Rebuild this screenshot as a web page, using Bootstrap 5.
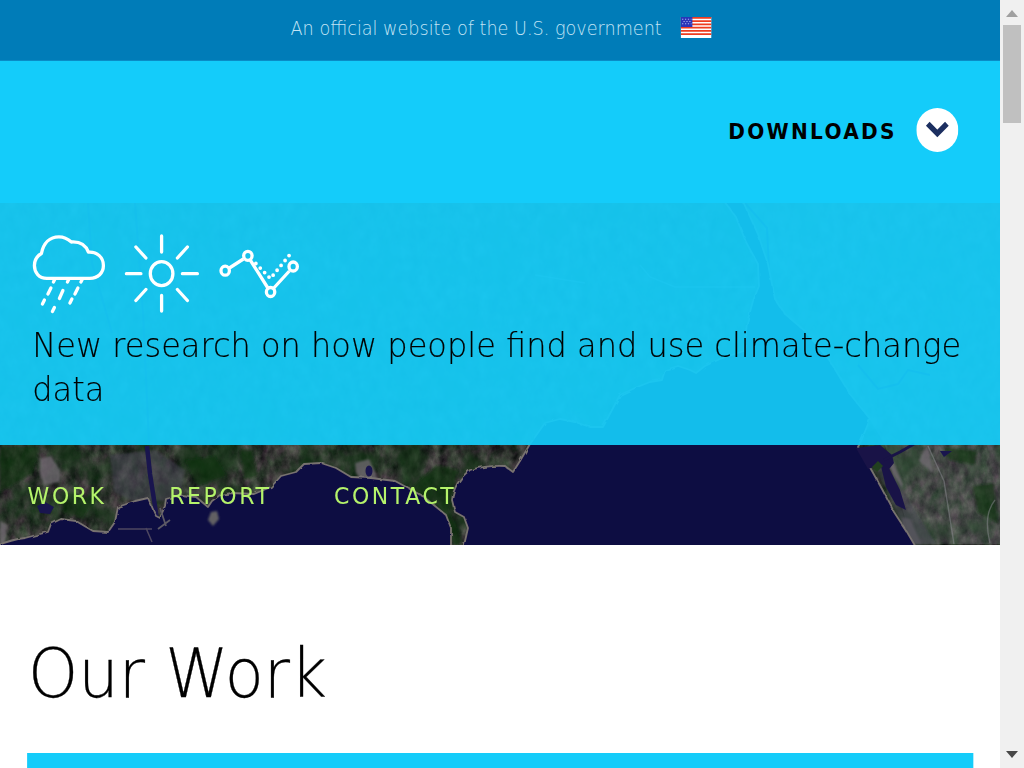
<!DOCTYPE html>
<html lang="en">
<head>
<meta charset="utf-8">
<meta name="viewport" content="width=device-width, initial-scale=1">
<title>Climate data research</title>
<link href="https://cdn.jsdelivr.net/npm/bootstrap@5.3.0/dist/css/bootstrap.min.css" rel="stylesheet">
<style>
body{font-family:"DejaVu Sans",sans-serif;color:#000;background:#fff}
.frame{height:768px}
.viewport-col{width:1000px}
.page{width:1069.5px;transform:scaleX(.935);transform-origin:0 0}
.gov{height:61px;background:#007cb8;color:#c2e4f5;font-size:18.85px;font-weight:200;gap:20px;padding:0 0 1px 2px;border-bottom:1px solid #0a8cc6}
.top{height:142px;background:#14ccfa;padding:47px 45px 0 0;gap:20.5px}
.dl{font-size:21.5px;font-weight:700;letter-spacing:2.4px;line-height:48px}
.knob{width:45px;height:44px}
.banner{height:341.5px}
.map{inset:0;width:100%;height:100%}
.hero{height:242px;background:rgba(20,204,250,.92);padding:30px 34.5px 0}
.hero h1{font-size:34.25px;font-weight:200;line-height:44px;margin:0 -8px 0 0;-webkit-text-stroke:.15px #000}
.icons{height:90px}
.menu{height:99.5px;padding:4px 29.5px 0;gap:67px}
.menu a{color:#b5f36b;font-size:23.5px;letter-spacing:2.75px;text-decoration:none}
.work{padding:88px 29px 0}
.work h2{font-size:68.3px;font-weight:200;line-height:84px;margin:-1px 0 37.5px 1px;-webkit-text-stroke:.3px #000}
.work .panel{height:60px;background:#14ccfa}
.scroller{width:24px;background:#f0f0f0}
.thumb{width:18px;height:98px;background:#c0c0c0}
</style>
</head>
<body>
<div class="frame d-flex overflow-hidden">
<div class="viewport-col overflow-hidden flex-shrink-0">
<div class="page">
  <div class="gov d-flex align-items-center justify-content-center">
    <span>An official website of the U.S. government</span>
    <svg width="33" height="21" viewBox="0 0 33 21" preserveAspectRatio="none" style="margin-top:-4px">
      <path fill="#fff" d="M0 0h33v21H0z"/>
      <path stroke="#ee3c20" stroke-width="1.7" d="M0 .8h33M0 4.1h33M0 7.4h33M0 10.6h33M0 13.9h33M0 17.2h33"/>
      <path fill="#2a35b8" d="M0 0h12.500v10H0z"/>
      <path stroke="#a9b4f0" stroke-width="1.1" stroke-dasharray="1.3 1.8" d="M1.500 2.200h10M3 4.500h8M1.500 6.800h10"/>
    </svg>
  </div>
  <header class="top d-flex align-items-start justify-content-end">
    <span class="dl">DOWNLOADS</span>
    <svg class="knob" viewBox="0 0 44 44" preserveAspectRatio="none"><circle cx="22" cy="22" r="22" fill="#fff"/><path d="M12 15.800l10 9.700 10-9.700" fill="none" stroke="#1c2f60" stroke-width="5.500"/></svg>
  </header>
  <section class="banner position-relative">
    <svg class="map position-absolute" viewBox="0 203 1000 341.5" preserveAspectRatio="none" aria-hidden="true">
      <defs>
        <filter id="grain" x="0" y="0" width="100%" height="100%" color-interpolation-filters="sRGB">
          <feTurbulence type="fractalNoise" baseFrequency=".1 .07" numOctaves="5" seed="8"/>
          <feColorMatrix values=".4 .1 0 0 -.05  .3 .25 0 0 -.06  .35 .1 0 0 -.03  0 0 0 0 1"/>
        </filter>
        <filter id="patches" x="0" y="0" width="100%" height="100%" color-interpolation-filters="sRGB">
          <feTurbulence type="fractalNoise" baseFrequency=".025" numOctaves="4" seed="21"/>
          <feColorMatrix values="0 0 0 0 .07  0 0 0 0 .2  0 0 0 0 .08  4 0 0 0 -1.9"/>
        </filter>
        <filter id="rough"><feTurbulence type="fractalNoise" baseFrequency=".12" numOctaves="2" seed="3"/><feDisplacementMap in="SourceGraphic" scale="3"/></filter>
        <filter id="soft"><feGaussianBlur stdDeviation="1.1"/></filter>
      </defs>
      <rect y="203" width="1000" height="342" filter="url(#grain)"/>
      <rect y="203" width="1000" height="342" filter="url(#patches)" opacity=".65"/>
      <rect y="203" width="1000" height="242" fill="#6a9a80" opacity=".3"/>
      <path d="M745 203l13 32 10 30 7 35 10 15 20 17 25 30 20 33 20 25 15 25 27 99h90V203z" fill="#c0c8d0" opacity=".14"/>
      <g fill="#716a72" opacity=".75" filter="url(#soft)">
        <path d="M40 459l11-3 9 14 0 12-16 3-4-10zM0 521l7 4-2 19H0zM355 463l14-4 7 15 3 14-15-4-8-11z"/>
        <path d="M886 463l7-2 10 23-1 5zM902 517l8 2 12 25h-14l-7-9zM924 450l5-1 4 24-14-12z"/>
      </g>
      <g fill="#4a4855" opacity=".55" filter="url(#soft)">
        <path d="M110 455l45-5 30 20-6 30-45 2-20-10zM874 462l12 2 50 80-24 2z"/>
      </g>
      <g fill="#0d3010" opacity=".6" filter="url(#soft)">
        <path d="M0 446h40l-8 28-32 18zM185 460l30-4 12 20-30 10zM408 490l30-25 20 5-9 40 14 32-8 4-12-20-20-22zM972 486l22-3 4 40-20-10zM945 447l32 4-2 14-26-5zM240 450l12 0 6 26-14 4zM60 490l35 8-12 20-20-5z"/>
      </g>
      <path d="M147 446l3 28 7 45 6 12" stroke="#19154e" stroke-width="4.500" fill="none"/>
      <path d="M88 203l4 60 20 70M135 203l8 110 6 130" stroke="#241d60" stroke-width="2" fill="none" opacity=".6"/>
      <path d="M745 203l22 25 2 40M858 365l20 24 20-5 10-14 22 5" fill="none" stroke="#201868" stroke-width="2" opacity=".7"/>
      <path d="M928 446l16 35 10 63M995 500q-12 15-5 43M640 265l10 12 25 10 80 0M535 275l50 8" fill="none" stroke="#8a8a90" stroke-width="1.400" opacity=".5"/>
      <g filter="url(#rough)" stroke="#77726f" stroke-width="1.800" stroke-linejoin="round" fill="#110b42">
        <path d="M-8 548Q8 540 25 538L48 532l3-8 10-5 15 2 17 10 15 1 7-10 3-15 17-6 13-3 8 18 4 2 5-12 1-7 15-4 15 2 12 10 4-6 8-6 12-2 22 1 17-7 10-11 15-4 8-8 17-1 15 5 15 9 20 1 24 3 15 8 14 8 22 18 5 13v24H-8z"/>
        <path d="M463 550l5-22-4-11-9-5-3-12q2-18 18-30 18-5 35-4l8 6 7-11 10-17 15-21 15-4 15 3 15 5 13 0 9-17 8-15 15-7 15-6 12-2 3-10 13-4 12 4 6 3 9-7 15-7 24-8 3-28 6-22 6-15-1-22-12-22-10-25-15-20h20l17 37 10 30 7 35 10 15 20 17 25 30 20 33 20 25-8 20-4 8 14 24 10 18 12 23 13 20 10 17z"/>
      </g>
      <path d="M856 448l24-3 12 10 2 8-8 10-6-8-12 4zM880 462l8 4 12 24 6 20-10-5-10-18z" fill="#191347"/>
      <path d="M884 460l16-8 14-8" stroke="#191347" stroke-width="3" fill="none"/>
      <g fill="#19154e"><ellipse cx="369" cy="471" rx="3.500" ry="5.500"/><path d="M37 506l8-4 9 5-4 7-10-1zM940 451l12 0-8 6z"/></g>
      <path d="M118 529h34M146 528l6 14" stroke="#4d4760" stroke-width="1.500" fill="none"/>
      <path d="M158 529l12-9M160 508l6 18" stroke="#5c5965" stroke-width="1.800" fill="none"/>
      <path d="M211 512l6-1 2 8-6 7-5-6z" fill="#626163" filter="url(#soft)"/>
      <path d="M872 467l6-6 5 5-6 6z" fill="#22401f"/>
    </svg>
    <div class="hero position-relative">
      <div class="icons">
        <svg class="d-block" width="290" height="90" viewBox="30 233 271.2 90" preserveAspectRatio="none" fill="none" stroke="#fff" stroke-width="3.300" style="margin-left:-2.5px">
          <path d="M47 278.300C39 278.300 34.500 272.500 34.500 265.500c0-5 2.500-9.500 7-12C43.500 243 50 236.800 59 236.800c5 0 9 2 12.500 5.200 8.500-.5 14.500 3.500 17 10.200 9-.7 15 5.500 15 13.300 0 7.500-5.500 12.800-13.500 12.800z" stroke-linejoin="round"/>
          <path d="M55 279l-1.500 3M69 279l-1.500 3M82.500 279l-1.500 3M51 288l-3 6M44.500 300l-2 4M63 290.500l-3.500 8M54.500 307.500l-2 4M78 288l-3 6M72 299l-2 4" stroke-linecap="round"/>
          <ellipse cx="161.700" cy="273.700" rx="11.300" ry="12"/>
          <path d="M161.700 236v16M161.700 295.500v15.500M126.500 273.700h14.500M182.500 273.700H197.500M136 247l10 11M187.500 247l-10 11M136 300.500l10-11M187.500 300.500l-10-11" stroke-linecap="round"/>
          <path d="M229.500 268l14-9M250 259.500l18 28.500M273.500 288.500l16-17.500"/>
          <ellipse cx="225.300" cy="270.700" rx="4.200" ry="4.500"/><ellipse cx="248" cy="255.800" rx="4.200" ry="4.500"/><ellipse cx="270.700" cy="292" rx="4.200" ry="4.500"/><ellipse cx="293.300" cy="266.500" rx="4.200" ry="4.500"/>
          <path d="M256 263.500l14.500 15 20-24.500" stroke-dasharray="0 6.300" stroke-linecap="round" stroke-width="3.800"/>
        </svg>
      </div>
      <h1>New research on how people find and use climate-change data</h1>
    </div>
    <nav class="menu position-relative d-flex align-items-center">
      <a href="#work">WORK</a><a href="#report">REPORT</a><a href="#contact">CONTACT</a>
    </nav>
  </section>
  <section class="work" id="work">
    <h2>Our Work</h2>
    <div class="panel"></div>
  </section>
</div>
</div>
<div class="scroller d-flex flex-column align-items-center flex-shrink-0" aria-hidden="true">
  <svg width="24" height="25" viewBox="0 0 24 25"><path d="M6 17l6-7 6 7z" fill="#a0a0a0"/></svg>
  <div class="thumb"></div>
  <svg class="mt-auto" width="24" height="25" viewBox="0 0 24 25"><path d="M6 8h12l-6 7z" fill="#484848"/></svg>
</div>
</div>
<script src="https://cdn.jsdelivr.net/npm/bootstrap@5.3.0/dist/js/bootstrap.bundle.min.js"></script>
</body>
</html>
